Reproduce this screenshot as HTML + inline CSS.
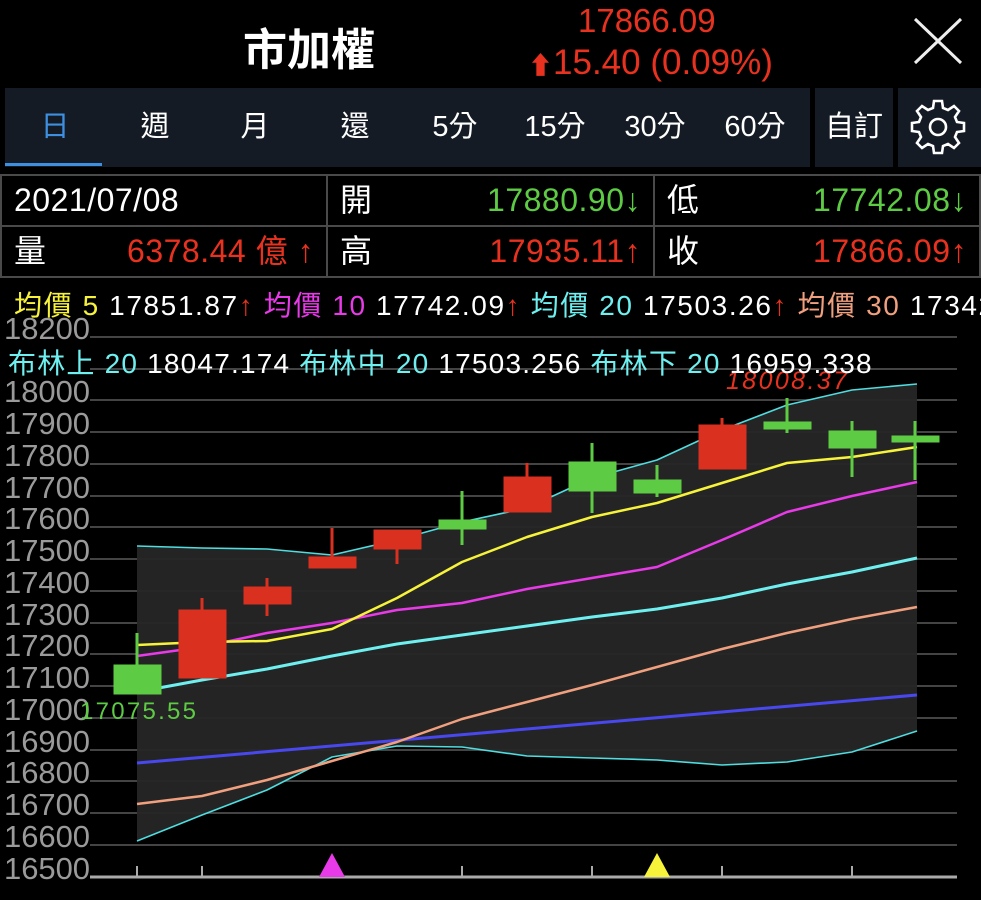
<!DOCTYPE html>
<html><head><meta charset="utf-8"><style>
*{margin:0;padding:0;box-sizing:border-box}
body{width:981px;height:900px;background:#000;overflow:hidden;font-family:"Liberation Sans","Noto Sans CJK TC",sans-serif;color:#fff;position:relative}
.a{position:absolute;white-space:nowrap}
.tabs{position:absolute;left:5px;top:88px;width:805px;height:79px;background:#141b24}
.tab{position:absolute;top:0;height:79px;line-height:79px;font-size:29px;text-align:center;width:100px;color:#fff}
.box{position:absolute;top:88px;height:79px;background:#141b24}
.cell{position:absolute;border:2px solid #4a4a4a;height:53px;font-size:32px;line-height:49px;letter-spacing:0.5px}
.r{color:#e8321f}.g{color:#5ecb45}
</style></head><body>
<div class="a" style="left:243px;top:14px;font-size:44px;font-weight:bold">市加權</div>
<div class="a r" style="left:578px;top:2px;font-size:33px">17866.09</div>
<div class="a r" style="left:528px;top:43px;font-size:35px"><span style="font-size:25px">⬆</span>15.40 (0.09%)</div>
<svg class="a" style="left:912px;top:16px" width="52" height="50"><path d="M3 3L49 47M49 3L3 47" stroke="#eee" stroke-width="3"/></svg>

<div class="tabs">
<div class="tab" style="left:0;color:#3d8fe0">日</div>
<div style="position:absolute;left:0;top:75px;width:97px;height:3px;background:#3d8fe0"></div>
<div class="tab" style="left:100px">週</div>
<div class="tab" style="left:200px">月</div>
<div class="tab" style="left:300px">還</div>
<div class="tab" style="left:400px">5分</div>
<div class="tab" style="left:500px">15分</div>
<div class="tab" style="left:600px">30分</div>
<div class="tab" style="left:700px">60分</div>
</div>
<div class="box" style="left:815px;width:78px;font-size:29px;line-height:79px;text-align:center">自訂</div>
<div class="box" style="left:898px;width:83px">
<svg width="83" height="79" viewBox="0 0 83 79"><g transform="translate(40,39)" fill="none" stroke="#fff" stroke-width="2.6">
<path d="M-4,-26 L4,-26 L5,-19 L10,-17 L16,-21 L21,-16 L17,-10 L19,-5 L26,-4 L26,4 L19,5 L17,10 L21,16 L16,21 L10,17 L5,19 L4,26 L-4,26 L-5,19 L-10,17 L-16,21 L-21,16 L-17,10 L-19,5 L-26,4 L-26,-4 L-19,-5 L-17,-10 L-21,-16 L-16,-21 L-10,-17 L-5,-19 Z"/>
<circle r="8"/></g></svg></div>

<div class="cell" style="left:0;top:174px;width:328px;padding-left:12px">2021/07/08</div>
<div class="cell" style="left:326px;top:174px;width:329px;padding:0 12px"><span>開</span><span class="g" style="float:right">17880.90↓</span></div>
<div class="cell" style="left:653px;top:174px;width:328px;padding:0 12px"><span>低</span><span class="g" style="float:right">17742.08↓</span></div>
<div class="cell" style="left:0;top:225px;width:328px;padding:0 12px"><span>量</span><span class="r" style="float:right">6378.44 億 ↑</span></div>
<div class="cell" style="left:326px;top:225px;width:329px;padding:0 12px"><span>高</span><span class="r" style="float:right">17935.11↑</span></div>
<div class="cell" style="left:653px;top:225px;width:328px;padding:0 12px"><span>收</span><span class="r" style="float:right">17866.09↑</span></div>

<svg class="a" style="left:0;top:0" width="981" height="900">
<g stroke="#444" stroke-width="2">
<line x1="90" x2="957" y1="337" y2="337"/><line x1="90" x2="957" y1="369" y2="369"/><line x1="90" x2="957" y1="400" y2="400"/><line x1="90" x2="957" y1="432" y2="432"/><line x1="90" x2="957" y1="464" y2="464"/><line x1="90" x2="957" y1="496" y2="496"/><line x1="90" x2="957" y1="527" y2="527"/><line x1="90" x2="957" y1="559" y2="559"/><line x1="90" x2="957" y1="591" y2="591"/><line x1="90" x2="957" y1="623" y2="623"/><line x1="90" x2="957" y1="654" y2="654"/><line x1="90" x2="957" y1="686" y2="686"/><line x1="90" x2="957" y1="718" y2="718"/><line x1="90" x2="957" y1="750" y2="750"/><line x1="90" x2="957" y1="781" y2="781"/><line x1="90" x2="957" y1="813" y2="813"/><line x1="90" x2="957" y1="845" y2="845"/>
</g>
<line x1="90" x2="957" y1="877" y2="877" stroke="#aaa" stroke-width="3"/>
<g stroke="#aaa" stroke-width="2"><line x1="137" x2="137" y1="866" y2="877"/><line x1="202" x2="202" y1="866" y2="877"/><line x1="462" x2="462" y1="866" y2="877"/><line x1="592" x2="592" y1="866" y2="877"/><line x1="722" x2="722" y1="866" y2="877"/><line x1="852" x2="852" y1="866" y2="877"/></g>
<polygon fill="#262626" fill-opacity="0.95" points="137,546 202,548 267,549 332,555 397,540 462,522 527,508 592,478 657,460 722,430 787,405 852,390 917,384 917,731 852,752 787,762 722,765 657,760 592,758 527,756 462,747 397,746 332,757 267,790 202,815 137,841"/>
<g font-size="31" fill="#9a9a9a" font-family="Liberation Sans,sans-serif">
<text x="4" y="339" textLength="86">18200</text><text x="4" y="402" textLength="86">18000</text><text x="4" y="434" textLength="86">17900</text><text x="4" y="466" textLength="86">17800</text><text x="4" y="498" textLength="86">17700</text><text x="4" y="529" textLength="86">17600</text><text x="4" y="561" textLength="86">17500</text><text x="4" y="593" textLength="86">17400</text><text x="4" y="625" textLength="86">17300</text><text x="4" y="656" textLength="86">17200</text><text x="4" y="688" textLength="86">17100</text><text x="4" y="720" textLength="86">17000</text><text x="4" y="752" textLength="86">16900</text><text x="4" y="783" textLength="86">16800</text><text x="4" y="815" textLength="86">16700</text><text x="4" y="847" textLength="86">16600</text><text x="4" y="879" textLength="86">16500</text>
</g>
<g fill="none" stroke-linejoin="round">
<polyline stroke="#4fdde0" stroke-width="1.6" points="137,546 202,548 267,549 332,555 397,540 462,522 527,508 592,478 657,460 722,430 787,405 852,390 917,384"/>
<polyline stroke="#4fdde0" stroke-width="1.6" points="137,841 202,815 267,790 332,757 397,746 462,747 527,756 592,758 657,760 722,765 787,762 852,752 917,731"/>
<polyline stroke="#4848ee" stroke-width="3" points="137,763 917,695"/>
<polyline stroke="#f0a07e" stroke-width="2.5" points="137,804 202,796 267,780 332,761 397,742 462,719 527,702 592,685 657,667 722,649 787,633 852,619 917,607"/>
<polyline stroke="#6ff0f0" stroke-width="3" points="137,692 202,680 267,669 332,656 397,644 462,635 527,626 592,617 657,609 722,598 787,584 852,572 917,558"/>
<polyline stroke="#e83ae8" stroke-width="2.5" points="137,656 202,647 267,633 332,623 397,610 462,603 527,589 592,578 657,567 722,540 787,512 852,496 917,482"/>
<polyline stroke="#f6f33a" stroke-width="2.5" points="137,645 202,642 267,641 332,629 397,598 462,562 527,537 592,517 657,503 722,483 787,463 852,457 917,447"/>
</g>
<g stroke-width="3">
<g stroke="#5ecb45" fill="#5ecb45">
<line x1="137" x2="137" y1="633" y2="693"/><rect x="115" y="666" width="45" height="27"/>
<line x1="462" x2="462" y1="491" y2="545"/><rect x="440" y="521" width="45" height="7"/>
<line x1="592" x2="592" y1="443" y2="513"/><rect x="570" y="463" width="45" height="27"/>
<line x1="657" x2="657" y1="465" y2="497"/><rect x="635" y="481" width="45" height="11"/>
<line x1="787" x2="787" y1="398" y2="433"/><rect x="765" y="423" width="45" height="5"/>
<line x1="852" x2="852" y1="421" y2="477"/><rect x="830" y="432" width="45" height="15"/>
<line x1="915" x2="915" y1="421" y2="480"/><rect x="893" y="437" width="45" height="4"/>
</g>
<g stroke="#d9301f" fill="#d9301f">
<line x1="202" x2="202" y1="598" y2="677"/><rect x="180" y="611" width="45" height="66"/>
<line x1="267" x2="267" y1="578" y2="616"/><rect x="245" y="588" width="45" height="15"/>
<line x1="332" x2="332" y1="528" y2="567"/><rect x="310" y="558" width="45" height="9"/>
<line x1="397" x2="397" y1="531" y2="564"/><rect x="375" y="531" width="45" height="17"/>
<line x1="527" x2="527" y1="463" y2="511"/><rect x="505" y="478" width="45" height="33"/>
<line x1="722" x2="722" y1="418" y2="468"/><rect x="700" y="426" width="45" height="42"/>
</g></g>
<polygon fill="#e83ae8" points="332,853 319,877 345,877"/>
<polygon fill="#f6f33a" points="657,853 644,877 670,877"/>
<text x="80" y="719" font-size="24" fill="#5ecb45" textLength="116">17075.55</text>
<text x="726" y="389" font-size="25" fill="#e8321f" font-style="italic" textLength="121">18008.37</text>
</svg>
<div class="a" style="left:14px;top:284px;font-size:28px;letter-spacing:1.6px"><span style="color:#f6f33a">均價 5</span> 17851.87<span class="r">↑</span> <span style="color:#e83ae8">均價 10</span> 17742.09<span class="r">↑</span> <span style="color:#6ff0f0">均價 20</span> 17503.26<span class="r">↑</span> <span style="color:#f0a07e">均價 30</span> 17342</div>
<div class="a" style="left:8px;top:342px;font-size:28px;letter-spacing:1.2px"><span style="color:#6ff0f0">布林上 20</span> 18047.174 <span style="color:#6ff0f0">布林中 20</span> 17503.256 <span style="color:#6ff0f0">布林下 20</span> 16959.338</div>
</body></html>
